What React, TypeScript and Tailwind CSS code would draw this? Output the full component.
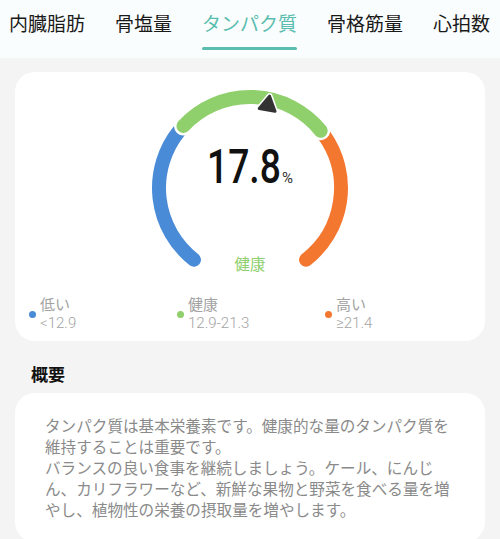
import React from "react";

const tabs = ["内臓脂肪", "骨塩量", "タンパク質", "骨格筋量", "心拍数"];

function Gauge() {
  return (
    <svg width="220" height="200" viewBox="0 0 220 200" className="absolute left-0 top-0">
      <path
        d="M 53.97 179.71 A 91 91 0 0 1 39.28 50.73"
        fill="none"
        stroke="#4a8bd8"
        strokeWidth="14"
        strokeLinecap="round"
      />
      <path
        d="M 184.54 55.80 A 91 91 0 0 1 166.03 179.71"
        fill="none"
        stroke="#f4772f"
        strokeWidth="14"
        strokeLinecap="round"
      />
      <path
        d="M 43.44 45.94 A 91 91 0 0 1 180.72 50.73"
        fill="none"
        stroke="#ffffff"
        strokeWidth="19"
        strokeLinecap="round"
      />
      <path
        d="M 43.44 45.94 A 91 91 0 0 1 180.72 50.73"
        fill="none"
        stroke="#8fd06c"
        strokeWidth="14"
        strokeLinecap="round"
      />
      <g transform="rotate(10 128 25)">
        <path d="M128 16 L136 30 L120 30 Z" fill="#ffffff" stroke="#ffffff" strokeWidth="6" strokeLinejoin="round" />
        <path d="M128 16 L136 30 L120 30 Z" fill="#333333" stroke="#333333" strokeWidth="3" strokeLinejoin="round" />
      </g>
    </svg>
  );
}

function LegendItem({ color, label, value }: { color: string; label: string; value: string }) {
  return (
    <div className="flex w-[148px] items-center gap-[4px]">
      <span className={`block h-[7px] w-[7px] rounded-full ${color}`} />
      <div className="flex flex-col text-[15px] leading-[18px] text-[#a3a3a3]">
        <span>{label}</span>
        <span className="font-light">{value}</span>
      </div>
    </div>
  );
}

export default function App() {
  return (
    <div
      className="min-h-screen bg-[#f4f4f4]"
      style={{ fontFamily: 'Roboto, "Noto Sans CJK JP", sans-serif' }}
    >
      <div className="flex h-[58px] gap-[30px] bg-[#fafdfd] pl-[9px] pt-[11px]">
        {tabs.map((t) => {
          const active = t === "タンパク質";
          return (
            <div key={t} className="flex flex-col items-stretch">
              <span
                className={`whitespace-nowrap text-[19px] leading-[28px] ${
                  active ? "text-[#5bbdb0]" : "text-[#1a1a1a]"
                }`}
              >
                {t}
              </span>
              {active && <span className="mt-[8px] block h-[3px] rounded-full bg-[#5bbdb0]" />}
            </div>
          );
        })}
      </div>

      <div className="mx-[15px] mt-[14px] rounded-[20px] bg-white pb-[9px] pt-[8px]">
        <div className="relative mx-auto h-[200px] w-[220px]">
          <Gauge />
          <div className="absolute left-0 right-0 top-[62px] flex items-baseline justify-center text-[#111111]">
            <span className="inline-block w-[73px] whitespace-nowrap">
              <span className="inline-block origin-left scale-x-[0.76] text-[49px] font-medium leading-none">
                17.8
              </span>
            </span>
            <span className="ml-[2px] text-[15px] leading-none text-[#333333]">%</span>
          </div>
          <div className="absolute left-0 right-0 top-[174px] text-center text-[15.5px] leading-[22px] text-[#8fcf6e]">
            健康
          </div>
        </div>
        <div className="mt-[16px] flex pl-[14px]">
          <LegendItem color="bg-[#4a8bd8]" label="低い" value="<12.9" />
          <LegendItem color="bg-[#8fd06c]" label="健康" value="12.9-21.3" />
          <LegendItem color="bg-[#f4772f]" label="高い" value="≥21.4" />
        </div>
      </div>

      <div className="mb-[5px] mt-[21px] pl-[31px] text-[17px] font-bold leading-[26px] text-[#111111]">
        概要
      </div>

      <div className="mx-[15px] rounded-[20px] bg-white px-[30px] pb-[20px] pt-[24px] text-[15.6px] leading-[21px] text-[#8a8a8a]">
        <p className="whitespace-nowrap">
          タンパク質は基本栄養素です。健康的な量のタンパク質を
          <br />
          維持することは重要です。
          <br />
          バランスの良い食事を継続しましょう。ケール、にんじ
          <br />
          ん、カリフラワーなど、新鮮な果物と野菜を食べる量を増
          <br />
          やし、植物性の栄養の摂取量を増やします。
        </p>
      </div>
    </div>
  );
}
